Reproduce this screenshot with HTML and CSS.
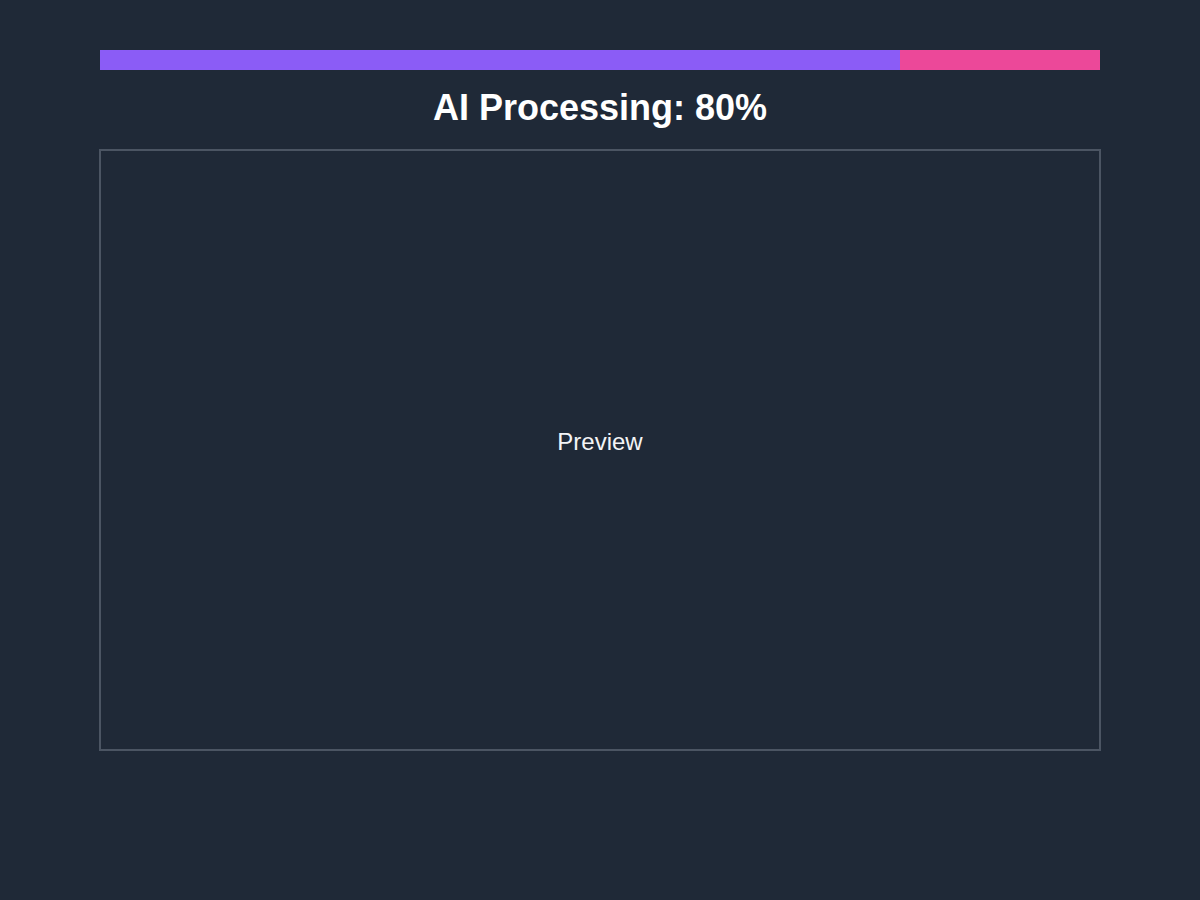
FILE: index.html
```html
<!DOCTYPE html>
<html>
<head>
<meta charset="utf-8">
<link rel="stylesheet" href="styles.css">
</head>
<body>
<div class="page">
  <div class="bar"><div class="fill" style="width:80%"></div></div>
  <h1 class="title">AI Processing: 80%</h1>
  <div class="preview"><span>Preview</span></div>
</div>
</body>
</html>
```
FILE: styles.css
```css
html, body { margin: 0; padding: 0; background: #1f2937; }
body { font-family: "Liberation Sans", Arial, sans-serif; color: #fff; }
.page { padding: 50px 100px; }
.bar { height: 20px; background: #ec4899; display: flex; }
.fill { background: #8b5cf6; height: 100%; }
.title { margin: 17px 0 0; font-size: 36px; line-height: 42px; font-weight: bold; text-align: center; height: 62px; }
.preview { box-sizing: border-box; height: 602px; margin: 0 -1px; padding-bottom: 16px; border: 2px solid #4b5563; display: flex; align-items: center; justify-content: center; font-size: 24px; color: #f3f4f6; }
```
